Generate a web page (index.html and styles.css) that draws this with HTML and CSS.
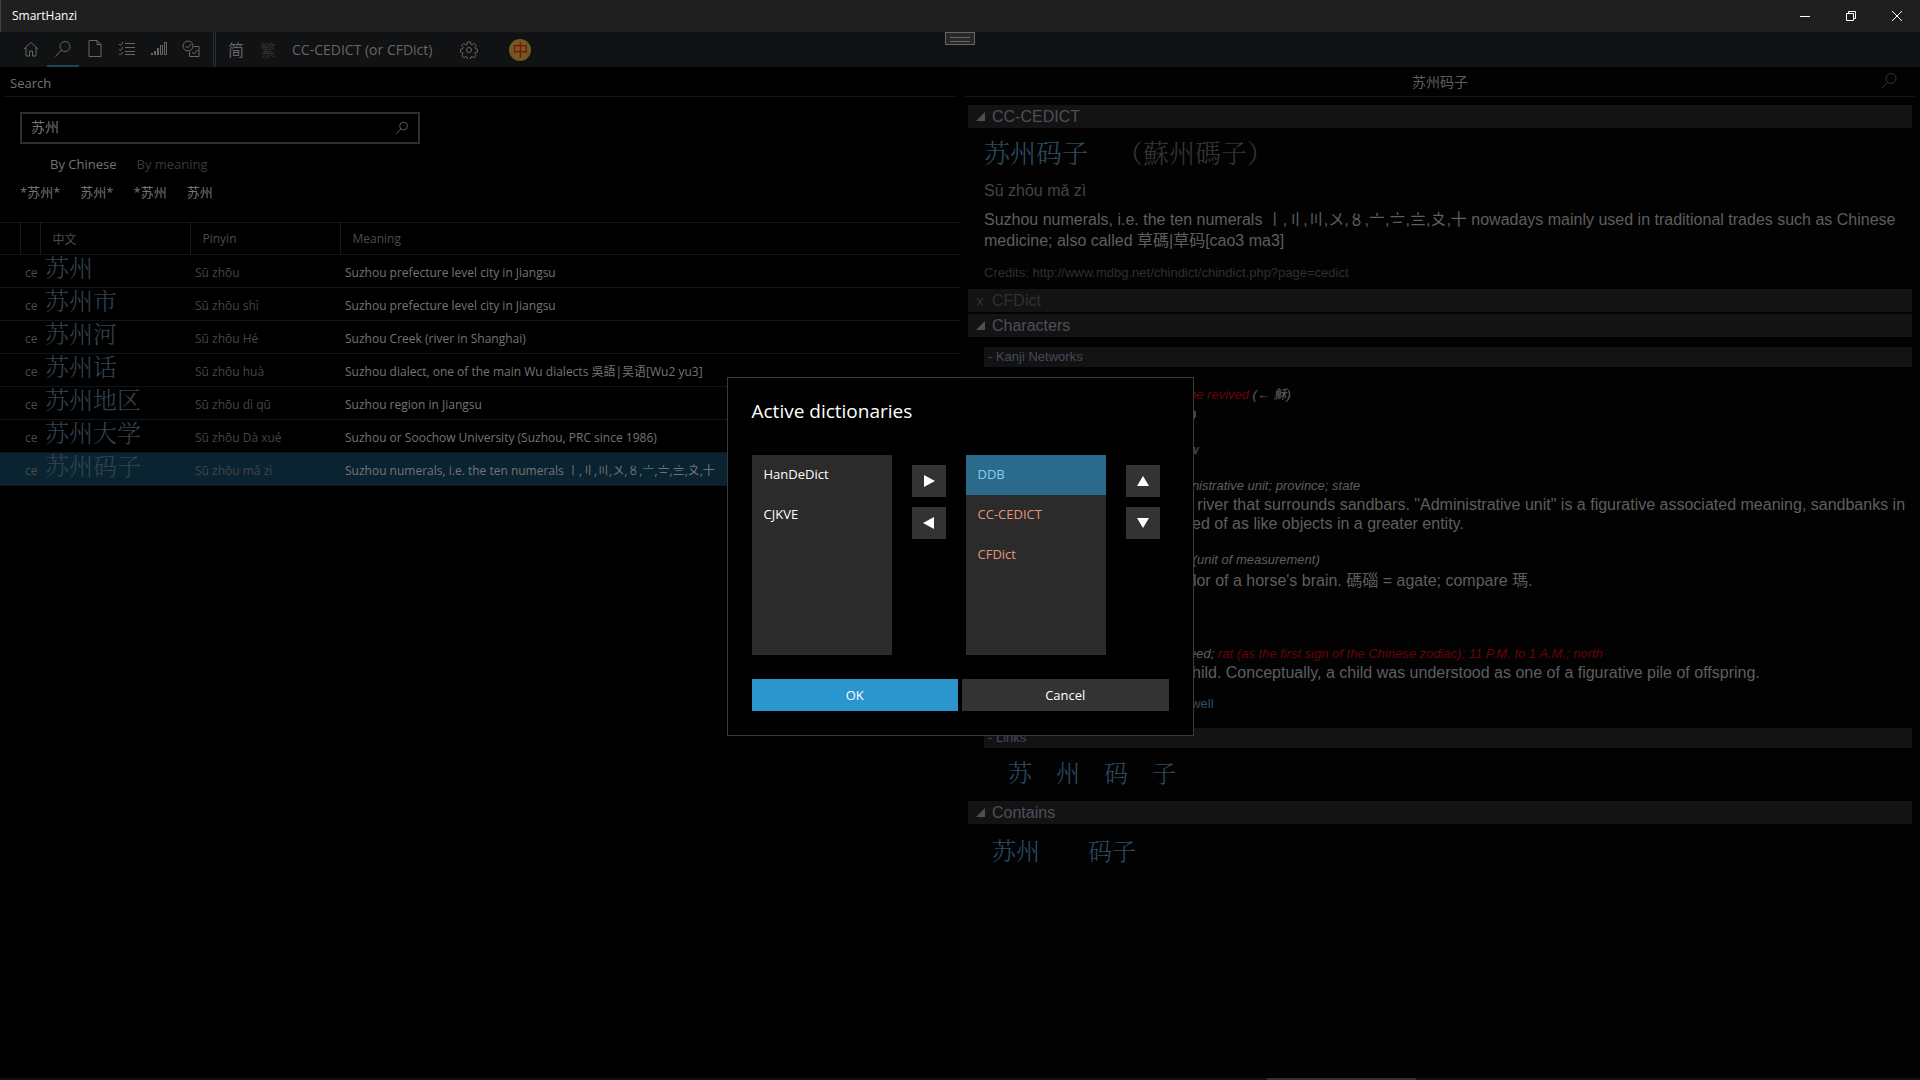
FILE: index.html
```html
<!DOCTYPE html>
<html lang="en">
<head>
  <meta charset="UTF-8">
  <title>SmartHanzi</title>
  <meta name="viewport" content="width=device-width, initial-scale=1.0">
  <link rel="stylesheet" href="styles.css">
</head>
<body>

  <header class="titlebar">
    <h1>SmartHanzi</h1>
    <div class="window-buttons">
      <button aria-label="Minimize"><svg width="10" height="10" viewBox="0 0 10 10"><path d="M0 5.5h10"/></svg></button>
      <button aria-label="Restore"><svg width="10" height="10" viewBox="0 0 10 10"><path d="M.5 2.5h7v7h-7zM2.5 2.5v-2h7v7h-2"/></svg></button>
      <button aria-label="Close"><svg width="10" height="10" viewBox="0 0 10 10"><path d="M0 0l10 10M10 0L0 10"/></svg></button>
    </div>
  </header>

  <div class="app">
    <nav class="toolbar">
      <div class="tools">
        <button aria-label="Home"><svg width="16" height="16" viewBox="0 0 16 16"><path d="M1 8l7-6.5L15 8M3 6.500V15h3.500v-5h3v5H13V6.500"/></svg></button>
        <button class="current" aria-label="Search"><svg width="18" height="18" viewBox="0 0 18 18"><circle cx="11" cy="6.500" r="5"/><path d="M7.500 10L1.500 16.500"/></svg></button>
        <button aria-label="Document"><svg width="14" height="17" viewBox="0 0 14 17"><path d="M1 .5h8L13 4.500v12H1zM9 .5v4h4"/></svg></button>
        <button aria-label="Lists"><svg width="18" height="16" viewBox="0 0 18 16"><path d="M7 2.500h10M7 6.500h10M7 10.500h10M7 13.500h10M1 3l1.500 1.500L5 1M1 8l1.500 1.500L5 6M1 12.500L2.500 14 5 11"/></svg></button>
        <button aria-label="Levels"><svg width="16" height="16" viewBox="0 0 16 16"><path class="solid" d="M0 12h2v2H0zM3 10h2v4H3zM6 7h2v7H6z"/><path d="M9.500 4.500h2v9h-2zM13.500 1.500h2v12h-2z"/></svg></button>
        <button aria-label="Tests"><svg width="18" height="18" viewBox="0 0 18 18"><circle cx="6" cy="6" r="5"/><path d="M3.500 6l2 2L9 4M12 6.500h5v10H7.500v-5M10 12l2 2 3.500-4"/></svg></button>
      </div>
      <div class="script-switch">
        <button>简</button>
        <button class="off">繁</button>
      </div>
      <button class="dictionary">CC-CEDICT (or CFDict)</button>
      <button class="settings" aria-label="Settings"><svg width="18" height="18" viewBox="0 0 18 18"><circle cx="9" cy="9" r="2.500"/><path d="M7.500 1h3l.4 2.300 1.300.6 2-1.400 2 2.100-1.300 2 .5 1.300 2.100.4v2.800l-2.200.4-.5 1.300 1.300 2-2 2-2-1.300-1.300.6-.4 2.200h-3l-.4-2.200-1.300-.6-2 1.300-2-2 1.400-2-.6-1.300-2.100-.4V8.300l2.200-.4.5-1.300-1.400-2 2-2.100 2 1.400 1.300-.6z"/></svg></button>
      <button class="badge" aria-label="Chinese">中</button>
      <div class="grip"></div>
    </nav>

    <main class="panes">
      <section class="pane">
        <div class="pane-head"><h2>Search</h2></div>

        <div class="search-form">
          <div class="search-box">
            <input type="text" value="苏州" aria-label="Search text">
            <button aria-label="Find"><svg width="14" height="14" viewBox="0 0 18 18"><circle cx="11" cy="6.500" r="5"/><path d="M7.500 10L1.500 16.500"/></svg></button>
          </div>
          <div class="modes">
            <button>By Chinese</button>
            <button class="off">By meaning</button>
          </div>
          <div class="filters">
            <button>*苏州*</button>
            <button>苏州*</button>
            <button>*苏州</button>
            <button>苏州</button>
          </div>
        </div>

        <table class="results">
          <colgroup>
            <col class="col-pad"><col class="col-src"><col class="col-word"><col class="col-word"><col>
          </colgroup>
          <thead>
            <tr><th></th><th></th><th>中文</th><th>Pinyin</th><th>Meaning</th></tr>
          </thead>
          <tbody>
            <tr><td></td><td class="src">ce</td><td class="hanzi">苏州</td><td class="pinyin">Sū zhōu</td><td>Suzhou prefecture level city in Jiangsu</td></tr>
            <tr><td></td><td class="src">ce</td><td class="hanzi">苏州市</td><td class="pinyin">Sū zhōu shì</td><td>Suzhou prefecture level city in Jiangsu</td></tr>
            <tr><td></td><td class="src">ce</td><td class="hanzi">苏州河</td><td class="pinyin">Sū zhōu Hé</td><td>Suzhou Creek (river in Shanghai)</td></tr>
            <tr><td></td><td class="src">ce</td><td class="hanzi">苏州话</td><td class="pinyin">Sū zhōu huà</td><td>Suzhou dialect, one of the main Wu dialects 吳語|吴语[Wu2 yu3]</td></tr>
            <tr><td></td><td class="src">ce</td><td class="hanzi">苏州地区</td><td class="pinyin">Sū zhōu dì qū</td><td>Suzhou region in Jiangsu</td></tr>
            <tr><td></td><td class="src">ce</td><td class="hanzi">苏州大学</td><td class="pinyin">Sū zhōu Dà xué</td><td>Suzhou or Soochow University (Suzhou, PRC since 1986)</td></tr>
            <tr class="selected"><td></td><td class="src">ce</td><td class="hanzi">苏州码子</td><td class="pinyin">Sū zhōu mǎ zì</td><td>Suzhou numerals, i.e. the ten numerals 〡,〢,〣,〤,〥,〦,〧,〨,〩,十</td></tr>
          </tbody>
        </table>
      </section>

      <section class="pane detail">
        <div class="pane-head centered">
          <h2>苏州码子</h2>
          <button aria-label="Find"><svg width="18" height="18" viewBox="0 0 18 18"><circle cx="11" cy="6.500" r="5"/><path d="M7.500 10L1.500 16.500"/></svg></button>
        </div>

        <div class="article">
          <h3 class="bar"><span class="fold"></span>CC-CEDICT</h3>
          <div class="entry">
            <p class="headword"><a href="#">苏州码子</a><span>（蘇州碼子）</span></p>
            <p class="reading">Sū zhōu mǎ zì</p>
            <p class="meaning">Suzhou numerals, i.e. the ten numerals 〡,〢,〣,〤,〥,〦,〧,〨,〩,十 nowadays mainly used in traditional trades such as Chinese medicine; also called 草碼|草码[cao3 ma3]</p>
            <p class="credits">Credits: http://www.mdbg.net/chindict/chindict.php?page=cedict</p>
          </div>

          <h3 class="bar closed"><span class="cross">x</span>CFDict</h3>
          <h3 class="bar"><span class="fold"></span>Characters</h3>
          <h4 class="subbar">- Kanji Networks</h4>
          <div class="networks">
            <div class="char">
              <p class="gloss"><em>be revived</em> (← 穌)</p>
              <p>io</p>
            </div>
            <div class="char">
              <p class="gloss">w</p>
            </div>
            <div class="char">
              <p class="gloss">inistrative unit; province; state</p>
              <p>a river that surrounds sandbars. "Administrative unit" is a figurative associated meaning, sandbanks in<br>ved of as like objects in a greater entity.</p>
            </div>
            <div class="char">
              <p class="gloss">&nbsp;(unit of measurement)</p>
              <p class="tall">olor of a horse's brain. 碼碯 = agate; compare 瑪.</p>
            </div>
            <div class="char last">
              <p class="gloss">eed; <em>rat (as the first sign of the Chinese zodiac); 11 P.M. to 1 A.M.; north</em></p>
              <p>child. Conceptually, a child was understood as one of a figurative pile of offspring.</p>
            </div>
            <p class="source"><a href="#">owell</a></p>
          </div>

          <h4 class="subbar">- Links</h4>
          <div class="links">
            <a href="#">苏</a><a href="#">州</a><a href="#">码</a><a href="#">子</a>
          </div>

          <h3 class="bar"><span class="fold"></span>Contains</h3>
          <div class="contains">
            <a href="#">苏州</a><a href="#">码子</a>
          </div>
        </div>
      </section>
    </main>

    <footer class="strip"><div></div></footer>

    <div class="overlay">
      <div class="dialog" role="dialog" aria-labelledby="dialogTitle">
        <h2 id="dialogTitle">Active dictionaries</h2>
        <div class="picker">
          <ul class="listbox" role="listbox" aria-label="Available">
            <li role="option">HanDeDict</li>
            <li role="option">CJKVE</li>
          </ul>
          <div class="arrows">
            <button aria-label="Add"><svg width="12" height="12" viewBox="0 0 12 12"><path d="M1 0l11 6-11 6z"/></svg></button>
            <button aria-label="Remove"><svg width="12" height="12" viewBox="0 0 12 12"><path d="M11 0L0 6l11 6z"/></svg></button>
          </div>
          <ul class="listbox active" role="listbox" aria-label="Active">
            <li role="option" class="selected" aria-selected="true">DDB</li>
            <li role="option">CC-CEDICT</li>
            <li role="option">CFDict</li>
          </ul>
          <div class="arrows">
            <button aria-label="Move up"><svg width="12" height="12" viewBox="0 0 12 12"><path d="M6 1l6 10H0z"/></svg></button>
            <button aria-label="Move down"><svg width="12" height="12" viewBox="0 0 12 12"><path d="M0 1h12L6 11z"/></svg></button>
          </div>
        </div>
        <div class="actions">
          <button class="primary">OK</button>
          <button>Cancel</button>
        </div>
      </div>
    </div>
  </div>

</body>
</html>
```
FILE: styles.css
```css
* { margin: 0; padding: 0; box-sizing: border-box; }

body {
  display: flex;
  flex-direction: column;
  height: 100vh;
  overflow: hidden;
  background: #000;
  color: #747474;
  font-family: 'Open Sans', 'Noto Sans CJK SC', sans-serif;
  font-size: 12px;
}

h1, h2, h3, h4 { font-size: inherit; font-weight: normal; }
button { background: none; border: none; color: inherit; font: inherit; }
a { color: #2c4d62; text-decoration: none; }
svg { display: block; fill: none; stroke: currentColor; }

/* Window */
.titlebar {
  display: flex;
  justify-content: space-between;
  align-items: center;
  height: 32px;
  padding-left: 11px;
  background: #1f1f1f;
  border-left: 1px solid #3a4444;
  color: #fff;
  font-size: 12px;
}

.titlebar h1 { padding-bottom: 2px; }

.window-buttons { display: flex; height: 100%; }

.window-buttons button {
  display: grid;
  place-items: center;
  width: 46px;
}

.app {
  position: relative;
  display: flex;
  flex: 1;
  flex-direction: column;
  min-height: 0;
}

/* Toolbar */
.toolbar {
  position: relative;
  display: flex;
  align-items: center;
  height: 35px;
  padding-left: 15px;
  background: #111214;
  color: #666;
}

.tools, .script-switch { display: flex; height: 100%; }

.tools {
  padding-right: 6px;
  border-right: 3px double #2b2c2e;
}

.tools button {
  display: grid;
  place-items: center;
  width: 32px;
  border-bottom: 2px solid transparent;
}

.tools .current { border-bottom-color: #1f4558; }
.solid { fill: currentColor; stroke: none; }

.script-switch { padding: 0 8px 0 4px; }
.script-switch button { width: 32px; padding-bottom: 2px; font-size: 16px; }
.toolbar .off { color: #303030; }
.dictionary { font-size: 14px; }
.settings { margin-left: 28px; }

.badge {
  width: 22px;
  height: 22px;
  margin-left: 31px;
  border-radius: 50%;
  background: #6e5a22;
  color: #840e06;
  font-size: 16px;
  line-height: 20px;
}

.grip {
  position: absolute;
  top: 0;
  left: 50%;
  width: 30px;
  height: 13px;
  margin-left: -15px;
  padding: 4px;
  background: #27282a;
  border: 1px solid #666;
}

.grip::before {
  content: "";
  display: block;
  height: 3px;
  border: 1px solid #666;
  border-width: 1px 0;
}

/* Panes */
.panes {
  display: grid;
  grid-template-columns: 1fr 1fr;
  flex: 1;
  min-height: 0;
}

.pane { min-width: 0; }

.pane-head {
  display: flex;
  align-items: center;
  justify-content: space-between;
  height: 30px;
  margin: 0 5px;
  padding: 2px 5px 0;
  border-bottom: 1px solid #0b1a24;
  font-size: 13px;
}

.centered {
  display: grid;
  grid-template-columns: 1fr auto 1fr;
  padding: 0 17px 2px;
  font-size: 14px;
}

.centered h2 { grid-column: 2; }
.centered button { justify-self: end; color: #1b3d4e; }

/* Search */
.search-form { padding: 15px 20px 20px; }

.search-box {
  display: flex;
  align-items: center;
  width: 400px;
  height: 32px;
  padding: 0 9px;
  border: 2px solid #2e2e2e;
}

.search-box input {
  flex: 1;
  min-width: 0;
  padding-bottom: 4px;
  background: none;
  border: none;
  outline: none;
  color: inherit;
  font: inherit;
  font-size: 14px;
}

.modes { display: flex; gap: 20px; padding: 11px 30px 0; font-size: 13px; }
.modes .off { color: #3a3a3a; }
.filters { display: flex; gap: 20px; padding-top: 9px; font-size: 13px; line-height: 20px; }

.results {
  width: 100%;
  border-collapse: collapse;
  border-top: 1px solid #141414;
  table-layout: fixed;
}

.col-pad, .col-src { width: 20px; }
.col-word { width: 150px; }

.results tr { height: 33px; border-bottom: 1px solid #141414; }
.results thead tr { height: 32px; }

.results th {
  padding: 0 12px;
  border-left: 1px solid #1a1a1a;
  color: #4c4c4c;
  font-weight: normal;
  text-align: left;
}

.results th:first-child { border-left: none; }
.results td { padding: 4px 5px 0; line-height: 20px; white-space: nowrap; }
.results .src { color: #4c4c4c; }
.results .pinyin { color: #454545; }

.results .hanzi {
  padding-top: 0;
  color: #33434f;
  vertical-align: top;
}

.hanzi, .headword, .links, .contains {
  font-family: 'Noto Serif CJK SC', 'Noto Sans CJK SC', serif;
  font-weight: 300;
  font-size: 24px;
}

.results .hanzi { line-height: 24px; }
.results .selected { background: #0a2330; }

/* Dictionary article */
.detail {
  background: #020202;
  color: #5e5e5e;
  font-family: 'Liberation Sans', 'Noto Sans CJK SC', sans-serif;
}

.article { padding: 8px 8px 0; font-size: 16px; }

.bar {
  display: flex;
  align-items: center;
  gap: 7px;
  height: 23px;
  margin-bottom: 2px;
  padding-left: 8px;
  background: #131313;
  color: #4b5059;
}

.closed { color: #303030; }
.cross { width: 9px; font-size: 15px; }

.fold {
  width: 9px;
  height: 9px;
  background: #4b5059;
  clip-path: polygon(100% 0, 100% 100%, 0 100%);
}

.entry { padding: 3px 4px 6px 16px; }
.headword { font-size: 26px; line-height: 38px; }
.headword span { margin-left: 29px; color: #363636; }
.reading { padding-top: 10px; color: #454545; line-height: 20px; }
.meaning { padding-top: 8px; line-height: 21px; }
.credits { padding-top: 12px; color: #303030; font-size: 13px; line-height: 20px; }

.subbar {
  height: 20px;
  margin: 10px 0 0 16px;
  padding-left: 4px;
  background: #131313;
  color: #434a59;
  font-size: 13px;
  line-height: 20px;
}

.networks {
  padding: 19px 0 5px 216px;
  line-height: 19px;
  white-space: nowrap;
}

.char { padding-bottom: 18px; }
.networks .gloss { padding-left: 5px; font-size: 13px; font-style: italic; line-height: 18px; }
.gloss em { color: #6a0206; }
.tall { padding-bottom: 34px; line-height: 24px; }
.char.last { padding-bottom: 12px; }
.source { font-size: 13px; }

.links { display: flex; gap: 24px; padding: 6px 40px 11px; line-height: 36px; }
.contains { display: flex; gap: 48px; padding: 6px 24px; line-height: 36px; }

/* Bottom edge */
.strip { height: 2px; padding-left: 66%; background: #111; }
.strip div { width: 149px; height: 100%; background: #333; }

/* Dialog */
.overlay {
  position: absolute;
  inset: 0;
  display: grid;
  place-items: center;
}

.dialog {
  padding: 18px 24px 24px;
  background: #000;
  border: 1px solid #3a3a3a;
  color: #fff;
  font-size: 13px;
}

.dialog h2 { margin-bottom: 29px; font-size: 19px; line-height: 30px; }
.picker { display: flex; gap: 20px; padding-right: 9px; }

.listbox {
  width: 140px;
  height: 200px;
  background: #2b2b2b;
  list-style: none;
}

.listbox li { height: 40px; padding: 0 12px; line-height: 38px; }
.active li { color: #e8947a; }
.active .selected { background: #2a6a8a; color: #8ccbf5; }

.arrows { display: flex; flex-direction: column; gap: 10px; padding-top: 10px; }

.arrows button {
  display: grid;
  place-items: center;
  width: 34px;
  height: 32px;
  background: #333;
}

.arrows svg { fill: #fff; stroke: none; }

.actions { display: flex; gap: 4px; margin-top: 24px; }
.actions button { flex: 1; height: 32px; background: #333; }
.actions .primary { background: #2a96cd; }
```
